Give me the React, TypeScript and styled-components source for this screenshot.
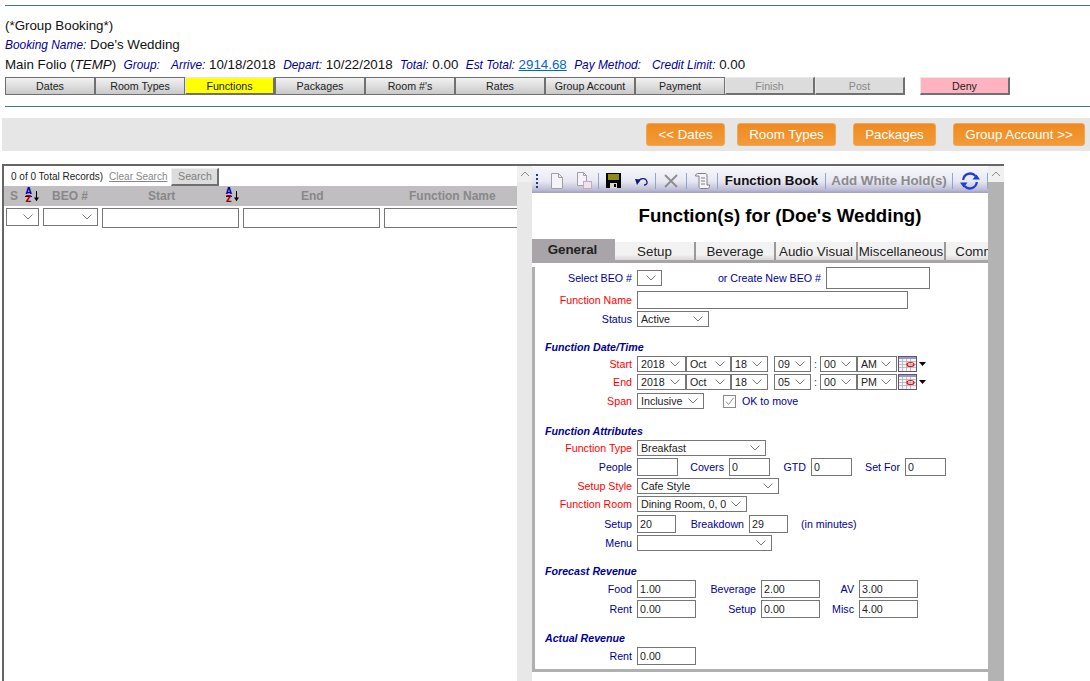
import React from "react";
import styled, {createGlobalStyle} from "styled-components";

const GlobalStyle = createGlobalStyle`
  html, body {
    margin: 0;
    padding: 0;
    height: 681px;
    overflow: hidden;
    background: white;
    font-family: "Liberation Sans", Arial, sans-serif;
  }
  * {
    box-sizing: border-box;
  }
`;

const chevron = encodeURIComponent(
  `<svg xmlns="http://www.w3.org/2000/svg" width="10" height="6"><path d="M.5.5l4.500 4.500 4.500-4.500" fill="none" stroke="#7a7a7a"/></svg>`,
);

const Page = styled.div`
  width: 1090px;
  height: 681px;
  overflow: hidden;
  padding-top: 5px;
`;

const Rule = styled.hr<{$mt: number}>`
  height: 1px;
  margin: ${(p) => p.$mt}px 0 0 5px;
  border: 0;
  background: #47729a;
`;

const Header = styled.div`
  padding: 11px 0 0 5px;
  font-size: 13.33px;
  color: #111;
`;

const HeaderLine = styled.div<{$h: number}>`
  height: ${(p) => p.$h}px;
  line-height: ${(p) => p.$h}px;
  white-space: pre;
`;

const Caption = styled.i`
  font-size: 11.9px;
  color: #000099;
`;

const TotalLink = styled.a`
  color: #0066cc;
  text-decoration: underline;
`;

const TabStrip = styled.div`
  display: flex;
  height: 18px;
  margin: 3px 0 0 5px;
`;

const StepTab = styled.div<{$kind?: "active" | "off" | "deny"; $ml?: number}>`
  display: flex;
  align-items: center;
  justify-content: center;
  width: 90px;
  height: 18px;
  margin-left: ${(p) => p.$ml ?? 0}px;
  font-size: 10.67px;
  color: ${(p) => (p.$kind === "off" ? "#888" : "#222")};
  background: ${(p) =>
    p.$kind === "active"
      ? "#ffff00"
      : p.$kind === "off"
        ? "#dcdcdc"
        : p.$kind === "deny"
          ? "#ffb2bf"
          : "linear-gradient(#f2f2f2, #c9c9c9)"};
  border-style: solid;
  ${(p) =>
    p.$kind
      ? `border-color: #e8e8e8 #707070 #707070 #e8e8e8; border-width: 1px 2px 2px 1px;`
      : `border-color: #707070; border-width: 1px;`}
`;

const ActionBand = styled.div`
  display: flex;
  justify-content: flex-end;
  align-items: flex-start;
  height: 33px;
  margin: 11px 0 0 2px;
  padding: 5px 5px 0 0;
  background: #e6e6e6;
`;

const ActionButton = styled.div<{$w: number; $ml: number}>`
  display: flex;
  align-items: center;
  justify-content: center;
  width: ${(p) => p.$w}px;
  height: 23px;
  margin-left: ${(p) => p.$ml}px;
  font-size: 13.33px;
  color: white;
  background: linear-gradient(#ee8b1f, #f39a3a);
  border: 1px solid #f0a654;
  border-radius: 3px;
`;

const Workspace = styled.div`
  display: flex;
  width: 1002px;
  height: 517px;
  margin: 13px 0 0 2px;
  border-top: 2px solid #666;
  border-left: 2px solid #666;
`;

const ListPane = styled.div`
  width: 513px;
  flex: none;
  overflow: hidden;
  padding-top: 1px;
`;

const ListTop = styled.div`
  display: flex;
  align-items: center;
  height: 19px;
  padding-left: 7px;
  font-size: 10px;
  color: #222;
`;

const ClearLink = styled.span`
  margin-left: 6px;
  color: #888;
  text-decoration: underline;
`;

const SearchButton = styled.div`
  display: flex;
  align-items: center;
  justify-content: center;
  width: 48px;
  height: 18px;
  margin-left: 4px;
  font-size: 10.67px;
  color: #808080;
  background: #dcdcdc;
  border-style: solid;
  border-width: 1px 2px 2px 1px;
  border-color: #eee #707070 #707070 #eee;
`;

const ColumnRow = styled.div`
  display: grid;
  grid-template-columns: 36px 60px 141px 141px 200px;
  height: 20px;
  background: #c0bec0;
  font-size: 12px;
  font-weight: bold;
  color: #888;
`;

const ColumnHead = styled.div<{$pl: number}>`
  display: flex;
  align-items: center;
  padding-left: ${(p) => p.$pl}px;
  white-space: nowrap;
`;

const SortMark = styled.span<{$ml: number}>`
  display: inline-flex;
  align-items: center;
  gap: 2px;
  margin-left: ${(p) => p.$ml}px;
`;

const SortLetters = styled.span`
  display: flex;
  flex-direction: column;
  align-items: center;
  width: 7px;
  font-size: 8px;
  line-height: 8px;
  font-family: "DejaVu Sans", sans-serif;
  font-weight: bold;
`;

const SortA = styled.span`
  height: 8px;
  color: #0000aa;
  box-shadow: 0 1px 0 #0000aa;
`;

const SortZ = styled.span`
  height: 8px;
  color: #990000;
`;

const FilterRow = styled.div`
  display: flex;
  margin-top: 2px;
`;

const Select = styled.select<{$w: number; $h?: number}>`
  width: ${(p) => p.$w}px;
  height: ${(p) => p.$h ?? 16}px;
  flex: none;
  appearance: none;
  padding: 0 0 0 3px;
  font-family: "Liberation Sans", Arial, sans-serif;
  font-size: 10.67px;
  color: #222;
  background: white url("data:image/svg+xml,${chevron}") no-repeat right 5px center;
  border: 1px solid #767676;
  border-radius: 0;
`;

const TextInput = styled.input<{$w: number; $h?: number}>`
  width: ${(p) => p.$w}px;
  height: ${(p) => p.$h ?? 18}px;
  flex: none;
  padding: 0 2px;
  font-family: "Liberation Sans", Arial, sans-serif;
  font-size: 10.67px;
  color: #222;
  background: white;
  border: 1px solid #767676;
  border-radius: 0;
  outline: 0;
`;

const ScrollTrack = styled.div<{$w: number}>`
  width: ${(p) => p.$w}px;
  flex: none;
  display: flex;
  flex-direction: column;
  background: #e8e8e8;
`;

const ScrollUp = styled.div`
  display: flex;
  align-items: center;
  justify-content: center;
  height: 16px;
  background: #f0f0f0;
`;

const ScrollThumb = styled.div`
  flex: 1;
  background: #b3b3b3;
`;

const DetailPane = styled.div`
  width: 456px;
  flex: none;
  overflow: hidden;
  padding-top: 1px;
`;

const Toolbar = styled.div`
  display: flex;
  align-items: center;
  height: 26px;
  padding-top: 1px;
  font-size: 13.33px;
  font-weight: bold;
  background: linear-gradient(#f6f6fb 0%, #e8e8f2 55%, #bcbcd6 88%, #9f9fc0 100%);
`;

const ToolSlot = styled.div<{$w: number}>`
  display: flex;
  align-items: center;
  justify-content: center;
  width: ${(p) => p.$w}px;
  flex: none;
  white-space: nowrap;
`;

const ToolText = styled(ToolSlot)<{$off?: boolean}>`
  color: ${(p) => (p.$off ? "#8a8a8a" : "#111")};
`;

const ToolSep = styled.div`
  width: 1px;
  height: 16px;
  flex: none;
  background: #8ea6cf;
`;

const Grip = styled.div`
  width: 2px;
  height: 14px;
  flex: none;
  margin: 0 5px 0 4px;
  background: repeating-linear-gradient(#223a80 0 2px, transparent 2px 4px);
`;

const Title = styled.h1`
  display: flex;
  align-items: center;
  justify-content: center;
  height: 46px;
  margin: 0;
  padding-left: 40px;
  font-size: 18.67px;
  font-weight: bold;
  color: #000;
`;

const FormTabs = styled.div`
  display: flex;
  align-items: flex-end;
  height: 24px;
  border-bottom: 3px solid #a8a4a8;
  overflow: hidden;
`;

const FormTab = styled.div<{$w: number; $active?: boolean}>`
  display: flex;
  align-items: center;
  justify-content: center;
  width: ${(p) => p.$w}px;
  height: ${(p) => (p.$active ? 21 : 18)}px;
  flex: none;
  font-size: 13.33px;
  font-weight: ${(p) => (p.$active ? "bold" : "normal")};
  white-space: nowrap;
  color: #222;
  background: ${(p) => (p.$active ? "#a8a4a8" : "linear-gradient(#f2f2f2 70%, #d8d8d8)")};
  border-right: 2px solid ${(p) => (p.$active ? "#a8a4a8" : "#999")};
`;

const Form = styled.div`
  padding: 0 0 4px 0;
  border-left: 3px solid #b0b0b0;
  border-bottom: 3px solid #b0b0b0;
  font-size: 10.67px;
`;

const Row = styled.div<{$h?: number; $mt?: number}>`
  display: flex;
  align-items: center;
  height: ${(p) => p.$h ?? 16}px;
  margin-top: ${(p) => p.$mt ?? 2}px;
`;

const Label = styled.label<{$w?: number; $red?: boolean}>`
  width: ${(p) => p.$w ?? 97}px;
  flex: none;
  margin-right: 5px;
  text-align: right;
  white-space: nowrap;
  color: ${(p) => (p.$red ? "#ff0000" : "#000099")};
`;

const SectionHead = styled.div<{$mt: number}>`
  height: 14px;
  margin-top: ${(p) => p.$mt}px;
  padding-left: 10px;
  line-height: 14px;
  font-style: italic;
  font-weight: bold;
  color: #000099;
`;

const Colon = styled.span`
  width: 9px;
  flex: none;
  text-align: center;
  color: #333;
`;

const CheckBox = styled.span`
  display: flex;
  align-items: center;
  justify-content: center;
  width: 13px;
  height: 13px;
  flex: none;
  margin: 0 6px 0 19px;
  background: white;
  border: 1px solid #8a8a8a;
`;

const Note = styled.span<{$ml: number}>`
  margin-left: ${(p) => p.$ml}px;
  white-space: nowrap;
  color: #000099;
`;

const Spaced = styled.div<{$w: number}>`
  width: ${(p) => p.$w}px;
  flex: none;
`;

const Chevron = () => (
  <svg height="6" viewBox="0 0 10 6" width="10">
    <path d="M1 5l4-4 4 4" fill="none" stroke="#8a8a8a" />
  </svg>
);

const SortIcon = () => (
  <SortLetters>
    <SortA>A</SortA>
    <SortZ>Z</SortZ>
  </SortLetters>
);

const DownArrow = () => (
  <svg height="15" viewBox="0 0 7 15" width="5">
    <path d="M3.500 0v11" stroke="#000" strokeWidth="1.400" />
    <path d="M0 9h7l-3.500 5z" fill="#000" />
  </svg>
);

const PageIcon = () => (
  <svg height="16" viewBox="0 0 12 16" width="12">
    <path d="M.5.5h7l4 4v11H.5zM7.5.5v4h4" fill="#f4f4f8" stroke="#a0a0a0" />
  </svg>
);

const CopyIcon = () => (
  <svg height="17" viewBox="0 0 15 17" width="15">
    <path d="M.5.5h6l3 3v10h-9zM6.5.5v3h3" fill="#f4f4f8" stroke="#a0a0a0" />
    <rect fill="#efe4ec" height="7" stroke="#c8a8c0" width="8" x="6.5" y="9.5" />
  </svg>
);

const SaveIcon = () => (
  <svg height="15" viewBox="0 0 15 15" width="15">
    <path d="M0 0h15v15H0z" fill="#000" />
    <path d="M2 1h11v6H2z" fill="#8c8c1a" />
    <path d="M4 10h7v5H4z" fill="#d8d8c0" />
    <path d="M8 11h2v3H8z" fill="#000" />
  </svg>
);

const UndoIcon = () => (
  <svg height="10" viewBox="0 0 13 10" width="13">
    <path d="M3 6c2-4 8-5 9 0 .3 2-1 3-3 3" fill="none" stroke="#101c78" strokeWidth="1.300" />
    <path d="M0 3l6 .5L2 9z" fill="#101c78" />
  </svg>
);

const CrossIcon = () => (
  <svg height="14" viewBox="0 0 14 14" width="14">
    <path d="M1 1l12 12M13 1L1 13" stroke="#8c8c8c" strokeWidth="1.800" />
  </svg>
);

const ScrollIcon = () => (
  <svg height="16" viewBox="0 0 15 16" width="15">
    <path
      d="M.5 3c0-1.500 1-2.500 2-2.500h8c1 0 1.500 1 1.500 2.500v9h2.500v1.500c0 1-.8 2-2 2H5.500c-1 0-1.500-1-1.500-2V3zM6 5h4M6 8h4M6 11h4"
      fill="#f4f4f8"
      stroke="#808080"
    />
  </svg>
);

const RefreshIcon = () => (
  <svg height="20" viewBox="0 0 20 20" width="20">
    <path d="M3.200 9A7 7 0 0 1 15.500 5" fill="none" stroke="#1c3fd8" strokeWidth="2.300" />
    <path d="M16.800 11A7 7 0 0 1 4.500 15" fill="none" stroke="#1c3fd8" strokeWidth="2.300" />
    <path d="M12.500 8.500h7.500l-3.500-5zM0 11.500h7.500l-4 5z" fill="#1c3fd8" />
  </svg>
);

const CalendarIcon = () => (
  <svg height="16" viewBox="0 0 19 16" width="19">
    <rect fill="#f6f4f6" height="15" stroke="#5c5470" width="18" x=".5" y=".5" />
    <path d="M1 2h17" stroke="#3a4090" />
    <path d="M1 5.500h17M1 8.500h17M1 11.500h17M4.500 3v12M8.500 3v12M12.500 3v12" stroke="#b4b0b4" strokeWidth=".8" />
    <ellipse cx="12.500" cy="8.500" fill="none" rx="3.500" ry="2" stroke="#e01010" strokeWidth="1.200" />
  </svg>
);

const DropArrow = () => (
  <svg height="4" viewBox="0 0 7 4" width="7">
    <path d="M0 0h7L3.500 4z" fill="#000" />
  </svg>
);

const CheckMark = () => (
  <svg height="11" viewBox="0 0 11 11" width="11">
    <path d="M2 5.500l2.500 3L9.500 2" fill="none" stroke="#8a8a8a" />
  </svg>
);

const DateRow: React.FC<{
  label: string;
  hour: string;
  meridian: string;
}> = ({label, hour, meridian}) => (
  <Row>
    <Label $red>{label}</Label>
    <Select $w={49}>
      <option>2018</option>
    </Select>
    <Select $w={45}>
      <option>Oct</option>
    </Select>
    <Select $w={37}>
      <option>18</option>
    </Select>
    <Spaced $w={6} />
    <Select $w={37}>
      <option>{hour}</option>
    </Select>
    <Colon>:</Colon>
    <Select $w={37}>
      <option>00</option>
    </Select>
    <Select $w={40}>
      <option>{meridian}</option>
    </Select>
    <Spaced $w={1} />
    <CalendarIcon />
    <Spaced $w={2} />
    <DropArrow />
  </Row>
);

const App: React.FC = () => {
  return (
    <Page>
      <GlobalStyle />
      <Rule $mt={0} />
      <Header>
        <HeaderLine $h={18}>(*Group Booking*)</HeaderLine>
        <HeaderLine $h={20}>
          <Caption>Booking Name:</Caption> Doe's Wedding
        </HeaderLine>
        <HeaderLine $h={19}>
          Main Folio (<i>TEMP</i>){"  "}
          <Caption>Group:</Caption>
          {"   "}
          <Caption>Arrive:</Caption> 10/18/2018{"  "}
          <Caption>Depart:</Caption> 10/22/2018{"  "}
          <Caption>Total:</Caption> 0.00{"  "}
          <Caption>Est Total:</Caption> <TotalLink>2914.68</TotalLink>
          {"  "}
          <Caption>Pay Method:</Caption>
          {"   "}
          <Caption>Credit Limit:</Caption> 0.00
        </HeaderLine>
      </Header>
      <TabStrip>
        <StepTab>Dates</StepTab>
        <StepTab>Room Types</StepTab>
        <StepTab $kind="active">Functions</StepTab>
        <StepTab>Packages</StepTab>
        <StepTab>Room #'s</StepTab>
        <StepTab>Rates</StepTab>
        <StepTab>Group Account</StepTab>
        <StepTab>Payment</StepTab>
        <StepTab $kind="off">Finish</StepTab>
        <StepTab $kind="off">Post</StepTab>
        <StepTab $kind="deny" $ml={15}>
          Deny
        </StepTab>
      </TabStrip>
      <Rule $mt={11} />
      <ActionBand>
        <ActionButton $ml={0} $w={79}>
          {"<< Dates"}
        </ActionButton>
        <ActionButton $ml={12} $w={99}>
          Room Types
        </ActionButton>
        <ActionButton $ml={17} $w={83}>
          Packages
        </ActionButton>
        <ActionButton $ml={17} $w={132}>
          {"Group Account >>"}
        </ActionButton>
      </ActionBand>
      <Workspace>
        <ListPane>
          <ListTop>
            0 of 0 Total Records)
            <ClearLink>Clear Search</ClearLink>
            <SearchButton>Search</SearchButton>
          </ListTop>
          <ColumnRow>
            <ColumnHead $pl={6}>
              S
              <SortMark $ml={7}>
                <SortIcon />
                <DownArrow />
              </SortMark>
            </ColumnHead>
            <ColumnHead $pl={12}>BEO #</ColumnHead>
            <ColumnHead $pl={48}>
              Start
              <SortMark $ml={50}>
                <SortIcon />
                <DownArrow />
              </SortMark>
            </ColumnHead>
            <ColumnHead $pl={60}>End</ColumnHead>
            <ColumnHead $pl={27}>Function Name</ColumnHead>
          </ColumnRow>
          <FilterRow>
            <Spaced $w={2} />
            <Select $h={18} $w={33} />
            <Spaced $w={4} />
            <Select $h={18} $w={55} />
            <Spaced $w={4} />
            <TextInput $h={20} $w={137} />
            <Spaced $w={4} />
            <TextInput $h={20} $w={137} />
            <Spaced $w={4} />
            <TextInput $h={20} $w={137} />
          </FilterRow>
        </ListPane>
        <ScrollTrack $w={15}>
          <ScrollUp>
            <Chevron />
          </ScrollUp>
        </ScrollTrack>
        <DetailPane>
          <Toolbar>
            <Grip />
            <ToolSlot $w={27}>
              <PageIcon />
            </ToolSlot>
            <ToolSlot $w={28}>
              <CopyIcon />
            </ToolSlot>
            <ToolSep />
            <ToolSlot $w={29}>
              <SaveIcon />
            </ToolSlot>
            <ToolSlot $w={27}>
              <UndoIcon />
            </ToolSlot>
            <ToolSep />
            <ToolSlot $w={30}>
              <CrossIcon />
            </ToolSlot>
            <ToolSep />
            <ToolSlot $w={30}>
              <ScrollIcon />
            </ToolSlot>
            <ToolSep />
            <ToolText $w={107}>Function Book</ToolText>
            <ToolSep />
            <ToolText $off $w={126}>
              Add White Hold(s)
            </ToolText>
            <ToolSep />
            <ToolSlot $w={34}>
              <RefreshIcon />
            </ToolSlot>
            <ToolSep />
          </Toolbar>
          <Title>Function(s) for (Doe's Wedding)</Title>
          <FormTabs>
            <FormTab $active $w={83}>
              General
            </FormTab>
            <FormTab $w={81}>Setup</FormTab>
            <FormTab $w={80}>Beverage</FormTab>
            <FormTab $w={82}>Audio Visual</FormTab>
            <FormTab $w={88}>Miscellaneous</FormTab>
            <FormTab $w={85}>Comments</FormTab>
          </FormTabs>
          <Form>
            <Row $h={22} $mt={4}>
              <Label>Select BEO #</Label>
              <Select $w={25} />
              <Label $w={159}>or Create New BEO #</Label>
              <TextInput $h={22} $w={104} />
            </Row>
            <Row $h={18}>
              <Label $red>Function Name</Label>
              <TextInput $w={271} />
            </Row>
            <Row $h={18} $mt={1}>
              <Label>Status</Label>
              <Select $w={72}>
                <option>Active</option>
              </Select>
            </Row>
            <SectionHead $mt={12}>Function Date/Time</SectionHead>
            <DateRow hour="09" label="Start" meridian="AM" />
            <DateRow hour="05" label="End" meridian="PM" />
            <Row $mt={3}>
              <Label $red>Span</Label>
              <Select $w={67}>
                <option>Inclusive</option>
              </Select>
              <CheckBox>
                <CheckMark />
              </CheckBox>
              <Note $ml={0}>OK to move</Note>
            </Row>
            <SectionHead $mt={15}>Function Attributes</SectionHead>
            <Row>
              <Label $red>Function Type</Label>
              <Select $w={129}>
                <option>Breakfast</option>
              </Select>
            </Row>
            <Row $h={18}>
              <Label>People</Label>
              <TextInput $w={41} />
              <Label $w={46}>Covers</Label>
              <TextInput $w={41} defaultValue="0" />
              <Label $w={36}>GTD</Label>
              <TextInput $w={41} defaultValue="0" />
              <Label $w={48}>Set For</Label>
              <TextInput $w={41} defaultValue="0" />
            </Row>
            <Row>
              <Label $red>Setup Style</Label>
              <Select $w={142}>
                <option>Cafe Style</option>
              </Select>
            </Row>
            <Row>
              <Label $red>Function Room</Label>
              <Select $w={110}>
                <option>Dining Room, 0, 0</option>
              </Select>
            </Row>
            <Row $h={18} $mt={3}>
              <Label>Setup</Label>
              <TextInput $w={39} defaultValue="20" />
              <Label $w={68}>Breakdown</Label>
              <TextInput $w={39} defaultValue="29" />
              <Note $ml={13}>(in minutes)</Note>
            </Row>
            <Row>
              <Label>Menu</Label>
              <Select $w={135} />
            </Row>
            <SectionHead $mt={13}>Forecast Revenue</SectionHead>
            <Row $h={18}>
              <Label>Food</Label>
              <TextInput $w={59} defaultValue="1.00" />
              <Label $w={60}>Beverage</Label>
              <TextInput $w={59} defaultValue="2.00" />
              <Label $w={34}>AV</Label>
              <TextInput $w={59} defaultValue="3.00" />
            </Row>
            <Row $h={18}>
              <Label>Rent</Label>
              <TextInput $w={59} defaultValue="0.00" />
              <Label $w={60}>Setup</Label>
              <TextInput $w={59} defaultValue="0.00" />
              <Label $w={34}>Misc</Label>
              <TextInput $w={59} defaultValue="4.00" />
            </Row>
            <SectionHead $mt={13}>Actual Revenue</SectionHead>
            <Row $h={18}>
              <Label>Rent</Label>
              <TextInput $w={59} defaultValue="0.00" />
            </Row>
          </Form>
        </DetailPane>
        <ScrollTrack $w={16}>
          <ScrollUp>
            <Chevron />
          </ScrollUp>
          <ScrollThumb />
        </ScrollTrack>
      </Workspace>
    </Page>
  );
};

export default App;
